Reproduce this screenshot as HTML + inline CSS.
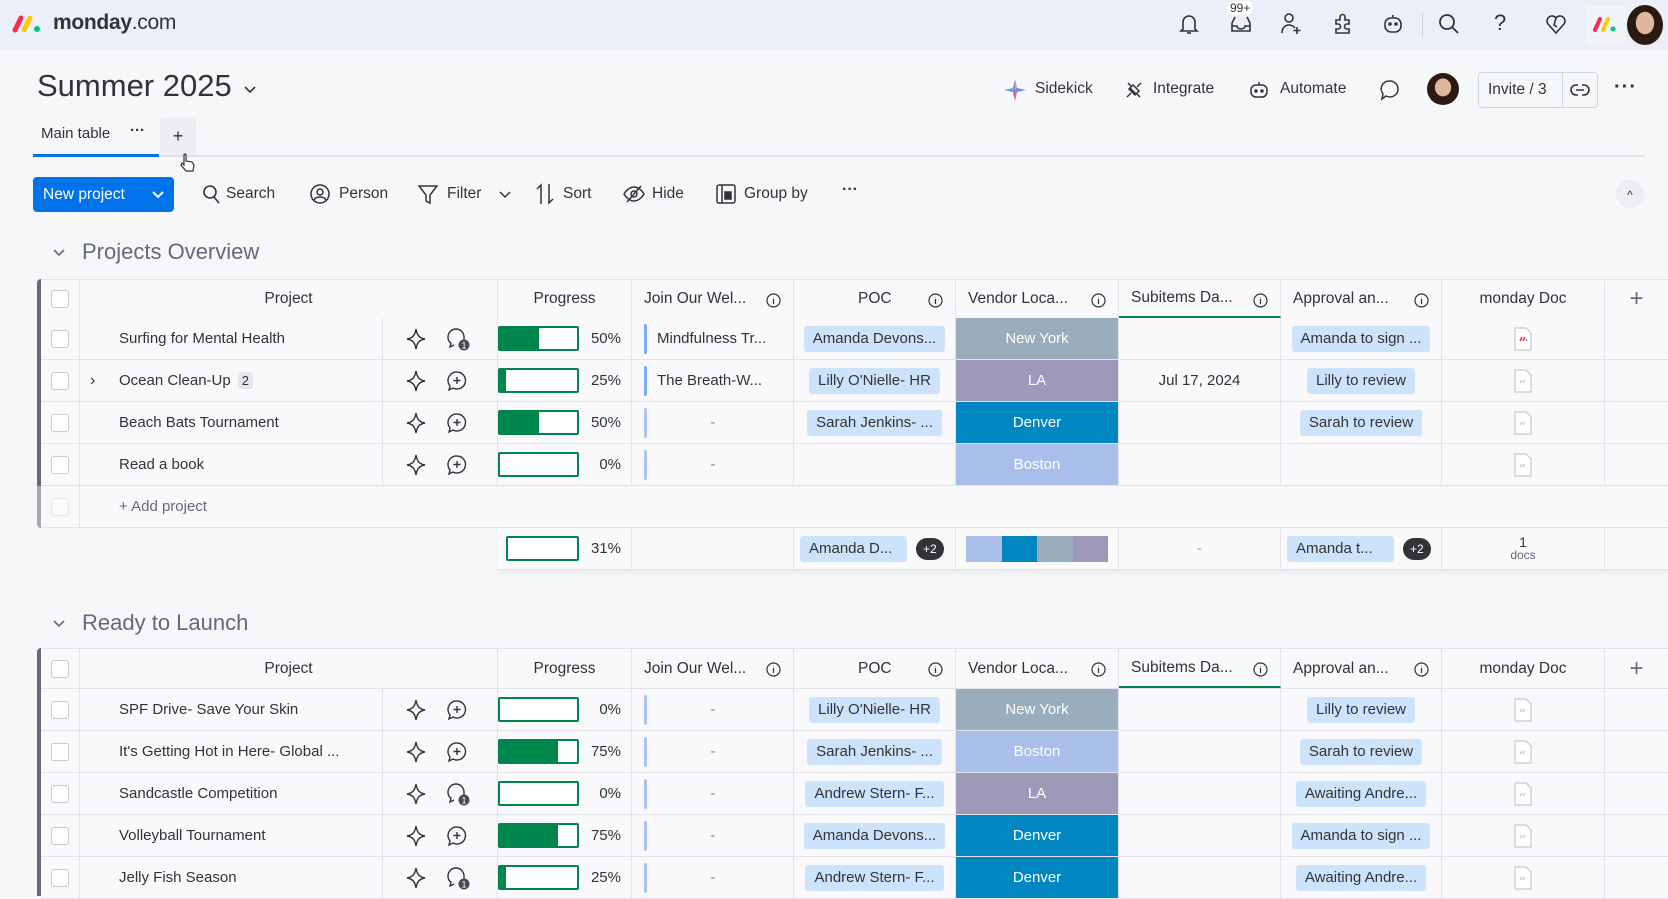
<!DOCTYPE html>
<html><head><meta charset="utf-8">
<style>
*{box-sizing:border-box;margin:0;padding:0}
body{width:1668px;height:896px;overflow:hidden;background:#f6f7f9;font-family:"Liberation Sans",sans-serif;color:#323338;position:relative}
.abs{position:absolute}
.top{position:absolute;left:0;top:0;width:1668px;height:50px;background:#eceff8}
svg{display:block}
.row{position:absolute;left:41px;height:42px;display:flex;border-bottom:1px solid #e3e4e9;background:#f9f9fb}
.c{height:100%;border-right:1px solid #e3e4e9;display:flex;align-items:center;font-size:15px;white-space:nowrap;overflow:hidden;position:relative}
.cb{width:39px;justify-content:center}
.chk{width:18px;height:18px;border:1px solid #c9cad0;border-radius:3px;background:#fff}
.pj{width:303px;padding-left:39px}
.ic{width:115px;gap:18px;padding-left:22px}
.pg{width:134px}
.jn{width:162px}
.poc{width:162px;justify-content:center}
.vd{width:163px;justify-content:center;color:#fff}
.sb{width:162px;justify-content:center}
.ap{width:161px;justify-content:center}
.dc{width:163px;justify-content:center}
.pl{width:63px;border-right:none}
.hdr .c{justify-content:center;font-size:15.5px;color:#323338}
.hdr .inf{position:absolute;right:12px;top:13px}
.bar{position:absolute;left:0;top:8px;width:81px;height:25px;border:2px solid #00854d;border-radius:2px;background:#fff}
.bar b{display:block;height:100%;background:#00854d}
.pct{position:absolute;right:10px;font-size:15px}
.jn i{position:absolute;left:12px;top:6px;width:3px;height:30px;border-radius:2px;background:#a9c5ef}
.jn i.d{background:#579bfc;opacity:.8}
.jn span{position:absolute;left:25px}
.jn span.dash{left:0;width:162px;text-align:center;color:#888}
.chip{background:#cce3fb;border-radius:3px;height:26px;line-height:26px;padding:0 9px;font-size:15px;color:#323338}
.ny{background:#9aadbd}.la{background:#9d99b9}.dn{background:#0086c0}.bs{background:#a9bee8}
.tb{font-size:15.5px;color:#323338}
.gt{font-size:22px;color:#676879}
</style></head><body>

<div class="top">
  <svg class="abs" style="left:12px;top:13px" width="30" height="20" viewBox="0 0 30 20"><path d="M3 17 L9 5" stroke="#f62b54" stroke-width="5" stroke-linecap="round"/><path d="M12 17 L18 5" stroke="#ffcc00" stroke-width="5" stroke-linecap="round"/><circle cx="25" cy="16" r="3" fill="#00ca72"/></svg>
  <div class="abs" style="left:53px;top:11px;font-size:21px;color:#323338;letter-spacing:-.3px"><b>monday</b>.com</div>
  <svg class="abs" style="left:1179px;top:13px" width="20" height="22" viewBox="0 0 20 22" fill="none" stroke="#323338" stroke-width="1.6"><path d="M4 16V9a6 6 0 0 1 12 0v7l2 2H2z"/><path d="M8 20h4"/></svg>
  <div class="abs" style="left:1227px;top:1px;font-size:12px;background:#fff;border-radius:8px;padding:0 3px">99+</div>
  <svg class="abs" style="left:1230px;top:14px" width="22" height="20" viewBox="0 0 22 20" fill="none" stroke="#323338" stroke-width="1.6"><path d="M2 9v8h18V9M2 9l3-6M20 9l-3-6M2 12h5a4 3 0 0 0 8 0h5"/></svg>
  <svg class="abs" style="left:1280px;top:12px" width="22" height="24" viewBox="0 0 22 24" fill="none" stroke="#323338" stroke-width="1.6"><circle cx="9" cy="6" r="4"/><path d="M2 21c0-5 3-8 7-8s5 2 6 3M17 15v7M13.5 18.5h7"/></svg>
  <svg class="abs" style="left:1331px;top:12px" width="22" height="24" viewBox="0 0 22 24" fill="none" stroke="#323338" stroke-width="1.6"><path d="M5 8h4V5a2.5 2.5 0 0 1 5 0v3h4v4h-2a2.5 2.5 0 0 0 0 5h2v4H5v-4h2a2.5 2.5 0 0 0 0-5H5z"/></svg>
  <svg class="abs" style="left:1382px;top:13px" width="22" height="22" viewBox="0 0 22 22" fill="none" stroke="#323338" stroke-width="1.6"><rect x="3" y="5" width="16" height="14" rx="6"/><path d="M11 2v3"/><circle cx="8" cy="11" r="1" fill="#323338"/><circle cx="14" cy="11" r="1" fill="#323338"/></svg>
  <div class="abs" style="left:1422px;top:12px;width:1px;height:26px;background:#d0d4e4"></div>
  <svg class="abs" style="left:1438px;top:13px" width="22" height="22" viewBox="0 0 22 22" fill="none" stroke="#323338" stroke-width="1.8"><circle cx="9" cy="9" r="7"/><path d="M14 14l6 6"/></svg>
  <div class="abs" style="left:1494px;top:10px;font-size:22px;color:#323338">?</div>
  <svg class="abs" style="left:1545px;top:13px" width="22" height="22" viewBox="0 0 22 22" fill="none" stroke="#323338" stroke-width="1.6"><path d="M11 20L3 11a5 5 0 0 1 8-6 5 5 0 0 1 8 6z"/><path d="M11 5l-2 7 3 2"/></svg>
  <div class="abs" style="left:1586px;top:6px;width:40px;height:38px;background:#f3f4f8;border-radius:4px"></div>
  <svg class="abs" style="left:1592px;top:15px" width="26" height="18" viewBox="0 0 26 18"><path d="M3 15 L8 4" stroke="#f62b54" stroke-width="4" stroke-linecap="round"/><path d="M11 15 L16 4" stroke="#ffcc00" stroke-width="4" stroke-linecap="round"/><circle cx="21" cy="14" r="2.5" fill="#00ca72"/></svg>
  <div class="abs" style="left:1627px;top:5px;width:36px;height:40px;border-radius:50%;background:radial-gradient(ellipse at 50% 45%,#e0b8a0 0 35%,#2a1a12 37%)"></div>
</div>

<div class="abs" style="left:37px;top:68px;font-size:31px;color:#323338">Summer 2025</div>
<svg class="abs" style="left:243px;top:85px" width="14" height="9" viewBox="0 0 14 9" fill="none" stroke="#323338" stroke-width="1.6"><path d="M2 2l5 5 5-5"/></svg>

<svg class="abs" style="left:1004px;top:79px" width="22" height="22" viewBox="0 0 22 22"><path d="M11 0 L13 9 L22 11 L13 13 L11 22 L9 13 L0 11 L9 9Z" fill="#6c8cf5"/><path d="M11 0 L13 9 L11 11Z" fill="#f5a623"/><path d="M0 11 L9 9 L11 11Z" fill="#4fc3c8"/><path d="M11 22 L9 13 L11 11Z" fill="#f05a8c"/></svg>
<div class="abs tb" style="left:1035px;top:80px">Sidekick</div>
<svg class="abs" style="left:1124px;top:80px" width="20" height="20" viewBox="0 0 20 20" fill="none" stroke="#323338" stroke-width="1.5"><path d="M4 3l3 3M16 17l-3-3M6 8l6 6M5 9l4-4 6 6-4 4zM3 17l4-4M17 3l-4 4"/></svg>
<div class="abs tb" style="left:1153px;top:80px">Integrate</div>
<svg class="abs" style="left:1249px;top:80px" width="20" height="20" viewBox="0 0 20 20" fill="none" stroke="#323338" stroke-width="1.5"><rect x="2" y="5" width="16" height="12" rx="5"/><path d="M10 2v3"/><circle cx="7" cy="11" r="1" fill="#323338"/><circle cx="13" cy="11" r="1" fill="#323338"/></svg>
<div class="abs tb" style="left:1280px;top:80px">Automate</div>
<svg class="abs" style="left:1379px;top:79px" width="22" height="22" viewBox="0 0 22 22" fill="none" stroke="#323338" stroke-width="1.5"><path d="M11 2a8 8 0 0 1 0 16c-2 0-3-.5-4-1l-4 3 1-5a8 8 0 0 1 7-13z"/></svg>
<div class="abs" style="left:1427px;top:73px;width:32px;height:32px;border-radius:50%;background:radial-gradient(ellipse at 50% 45%,#e0b8a0 0 35%,#2a1a12 37%)"></div>
<div class="abs" style="left:1478px;top:72px;width:120px;height:36px;border:1px solid #d0d4e4;border-radius:4px"></div>
<div class="abs" style="left:1562px;top:72px;width:1px;height:36px;background:#d0d4e4"></div>
<div class="abs tb" style="left:1488px;top:81px">Invite / 3</div>
<svg class="abs" style="left:1570px;top:81px" width="20" height="18" viewBox="0 0 20 18" fill="none" stroke="#323338" stroke-width="1.6"><path d="M8 4H6a5 5 0 0 0 0 10h2M12 4h2a5 5 0 0 1 0 10h-2M6 9h8"/></svg>
<div class="abs" style="left:1614px;top:76px;font-size:20px;letter-spacing:1px;font-weight:bold">···</div>

<div class="abs" style="left:41px;top:125px;font-size:15px">Main table</div>
<div class="abs" style="left:130px;top:122px;font-size:15px;font-weight:bold">···</div>
<div class="abs" style="left:160px;top:118px;width:36px;height:38px;background:#eceef2;border-radius:4px;font-size:18px;text-align:center;line-height:36px">+</div>
<div class="abs" style="left:33px;top:155px;width:1612px;height:2px;background:#e1e2e8"></div>
<div class="abs" style="left:33px;top:154px;width:126px;height:3px;background:#0073ea"></div>
<svg class="abs" style="left:180px;top:153px" width="16" height="20" viewBox="0 0 16 20" fill="#fff" stroke="#323338" stroke-width="1.2"><path d="M4 2v10l-2-2-1 2 5 6h7l1-6-2-3-6-1V2a1 1 0 0 0-2 0z"/></svg>

<div class="abs" style="left:33px;top:177px;width:141px;height:35px;background:#0073ea;border-radius:4px;color:#fff;font-size:15.5px;line-height:35px;padding-left:10px">New project</div>
<svg class="abs" style="left:152px;top:191px" width="12" height="8" viewBox="0 0 12 8" fill="none" stroke="#fff" stroke-width="2"><path d="M1 1l5 5 5-5"/></svg>
<svg class="abs" style="left:202px;top:184px" width="18" height="20" viewBox="0 0 18 20" fill="none" stroke="#323338" stroke-width="1.6"><circle cx="8" cy="8" r="6"/><path d="M12 13l5 6"/></svg>
<div class="abs tb" style="left:226px;top:185px">Search</div>
<svg class="abs" style="left:310px;top:184px" width="20" height="20" viewBox="0 0 20 20" fill="none" stroke="#323338" stroke-width="1.5"><circle cx="10" cy="10" r="9"/><circle cx="10" cy="8" r="3"/><path d="M4 16c2-4 10-4 12 0"/></svg>
<div class="abs tb" style="left:339px;top:185px">Person</div>
<svg class="abs" style="left:418px;top:184px" width="20" height="21" viewBox="0 0 20 21" fill="none" stroke="#323338" stroke-width="1.5"><path d="M1 2h18l-7 9v8l-4-2v-6z"/></svg>
<div class="abs tb" style="left:447px;top:185px">Filter</div>
<svg class="abs" style="left:499px;top:191px" width="12" height="8" viewBox="0 0 12 8" fill="none" stroke="#323338" stroke-width="1.5"><path d="M1 1l5 5 5-5"/></svg>
<svg class="abs" style="left:536px;top:183px" width="18" height="22" viewBox="0 0 18 22" fill="none" stroke="#323338" stroke-width="1.5"><path d="M5 21V2L1 6M13 1v19l4-4"/></svg>
<div class="abs tb" style="left:563px;top:185px">Sort</div>
<svg class="abs" style="left:623px;top:185px" width="22" height="18" viewBox="0 0 22 18" fill="none" stroke="#323338" stroke-width="1.5"><path d="M1 9c3-5 7-7 10-7s7 2 10 7c-3 5-7 7-10 7S4 14 1 9z"/><circle cx="11" cy="9" r="3"/><path d="M4 17L18 1"/></svg>
<div class="abs tb" style="left:652px;top:185px">Hide</div>
<svg class="abs" style="left:716px;top:184px" width="20" height="20" viewBox="0 0 20 20" fill="none" stroke="#323338" stroke-width="1.5"><rect x="1" y="1" width="18" height="18" rx="2"/><path d="M6 1v18"/><rect x="9" y="8" width="6" height="7" fill="#323338"/></svg>
<div class="abs tb" style="left:744px;top:185px">Group by</div>
<div class="abs" style="left:842px;top:181px;font-size:16px;font-weight:bold">···</div>
<div class="abs" style="left:1616px;top:180px;width:28px;height:28px;border-radius:50%;background:#eceef2;text-align:center;font-size:12px;line-height:30px">^</div>

<svg class="abs" style="left:52px;top:248px" width="14" height="9" viewBox="0 0 14 9" fill="none" stroke="#676879" stroke-width="1.6"><path d="M2 2l5 5 5-5"/></svg>
<div class="abs gt" style="left:82px;top:239px">Projects Overview</div>
<div class="abs" style="left:37px;top:279px;width:5px;height:207px;background:#676879;border-radius:4px 0 0 0"></div>
<div class="abs" style="left:37px;top:486px;width:5px;height:42px;background:#a8a9b0;border-radius:0 0 0 4px"></div>

<div class="row hdr" style="top:279px;height:40px;border-top:1px solid #e3e4e9">
<div class="c cb"><i class="chk"></i></div>
<div class="c" style="width:418px;padding-left:0">Project</div>
<div class="c pg" style="justify-content:center">Progress</div>
<div class="c jn" style="justify-content:flex-start;padding-left:12px">Join Our Wel...<svg class="inf" width="15" height="15" viewBox="0 0 15 15" fill="none" stroke="#323338" stroke-width="1.2"><circle cx="7.5" cy="7.5" r="6.5"/><path d="M7.5 6v5M7.5 4v.5"/></svg></div>
<div class="c poc" style="justify-content:flex-start;padding-left:64px">POC<svg class="inf" width="15" height="15" viewBox="0 0 15 15" fill="none" stroke="#323338" stroke-width="1.2"><circle cx="7.5" cy="7.5" r="6.5"/><path d="M7.5 6v5M7.5 4v.5"/></svg></div>
<div class="c vd" style="color:#323338;justify-content:flex-start;padding-left:12px">Vendor Loca...<svg class="inf" width="15" height="15" viewBox="0 0 15 15" fill="none" stroke="#323338" stroke-width="1.2"><circle cx="7.5" cy="7.5" r="6.5"/><path d="M7.5 6v5M7.5 4v.5"/></svg></div>
<div class="c sb" style="justify-content:flex-start;padding-left:12px;border-bottom:2px solid #00854d">Subitems Da...<svg class="inf" width="15" height="15" viewBox="0 0 15 15" fill="none" stroke="#323338" stroke-width="1.2"><circle cx="7.5" cy="7.5" r="6.5"/><path d="M7.5 6v5M7.5 4v.5"/></svg></div>
<div class="c ap" style="justify-content:flex-start;padding-left:12px">Approval an...<svg class="inf" width="15" height="15" viewBox="0 0 15 15" fill="none" stroke="#323338" stroke-width="1.2"><circle cx="7.5" cy="7.5" r="6.5"/><path d="M7.5 6v5M7.5 4v.5"/></svg></div>
<div class="c dc">monday Doc</div>
<div class="c pl" style="font-size:24px;font-weight:300;color:#676879">+</div>
</div>

<div class="row" style="top:318px">
<div class="c cb"><i class="chk"></i></div><div class="c pj">Surfing for Mental Health</div>
<div class="c ic"><svg width="22" height="24" viewBox="0 0 22 24" fill="none" stroke="#323338" stroke-width="1.4"><path d="M11 2C12 8 14 11 20 12 14 13 12 16 11 22 10 16 8 13 2 12 8 11 10 8 11 2Z"/></svg><svg width="26" height="26" viewBox="0 0 26 26" fill="none" stroke="#323338" stroke-width="1.4"><path d="M11 3a8 8 0 0 1 8 8v3M11 3a8 8 0 0 0-8 8c0 3 1 5 3 6l-1 4 4-2"/><circle cx="19" cy="19" r="5.5" fill="#4a4b52" stroke="none"/><text x="19" y="22.5" font-size="9" fill="#fff" stroke="none" text-anchor="middle" font-family="Liberation Sans">1</text></svg></div>
<div class="c pg"><div class="bar"><b style="width:50%"></b></div><span class="pct">50%</span></div>
<div class="c jn"><i class="d"></i><span>Mindfulness Tr...</span></div>
<div class="c poc"><span class="chip">Amanda Devons...</span></div>
<div class="c vd ny">New York</div><div class="c sb"></div>
<div class="c ap"><span class="chip">Amanda to sign ...</span></div>
<div class="c dc"><svg width="18" height="26" viewBox="0 0 18 26" fill="#fff" stroke="#c5c7d0" stroke-width="1.2"><path d="M1 2h11l5 5v17H1z"/><path d="M6 15l2-4M9 15l2-4" stroke="#f62b54" stroke-width="1.6"/><circle cx="12.5" cy="14" r="1" fill="#00ca72" stroke="none"/></svg></div><div class="c pl"></div>
</div>

<div class="row" style="top:360px">
<div class="c cb"><i class="chk"></i></div><div class="c pj"><span style="position:absolute;left:10px;font-size:16px">›</span>Ocean Clean-Up <span style="background:#e6e7ec;border-radius:3px;padding:1px 4px;font-size:13px;margin-left:7px">2</span></div>
<div class="c ic"><svg width="22" height="24" viewBox="0 0 22 24" fill="none" stroke="#323338" stroke-width="1.4"><path d="M11 2C12 8 14 11 20 12 14 13 12 16 11 22 10 16 8 13 2 12 8 11 10 8 11 2Z"/></svg><svg width="24" height="24" viewBox="0 0 24 24" fill="none" stroke="#323338" stroke-width="1.4"><path d="M12 3a8.5 8.5 0 1 1-4 16l-4 2 1-4a8.5 8.5 0 0 1 7-14z"/><path d="M12 8v7M8.5 11.5h7"/></svg></div>
<div class="c pg"><div class="bar"><b style="width:8%"></b></div><span class="pct">25%</span></div>
<div class="c jn"><i class="d"></i><span>The Breath-W...</span></div>
<div class="c poc"><span class="chip">Lilly O'Nielle- HR</span></div>
<div class="c vd la">LA</div><div class="c sb">Jul 17, 2024</div>
<div class="c ap"><span class="chip">Lilly to review</span></div>
<div class="c dc"><svg width="18" height="26" viewBox="0 0 18 26" fill="#fff" stroke="#c5c7d0" stroke-width="1.2"><path d="M1 2h11l5 5v17H1z"/><path d="M6 15l2-3M9 15l2-3"/></svg></div><div class="c pl"></div>
</div>

<div class="row" style="top:402px">
<div class="c cb"><i class="chk"></i></div><div class="c pj">Beach Bats Tournament</div>
<div class="c ic"><svg width="22" height="24" viewBox="0 0 22 24" fill="none" stroke="#323338" stroke-width="1.4"><path d="M11 2C12 8 14 11 20 12 14 13 12 16 11 22 10 16 8 13 2 12 8 11 10 8 11 2Z"/></svg><svg width="24" height="24" viewBox="0 0 24 24" fill="none" stroke="#323338" stroke-width="1.4"><path d="M12 3a8.5 8.5 0 1 1-4 16l-4 2 1-4a8.5 8.5 0 0 1 7-14z"/><path d="M12 8v7M8.5 11.5h7"/></svg></div>
<div class="c pg"><div class="bar"><b style="width:50%"></b></div><span class="pct">50%</span></div>
<div class="c jn"><i></i><span class="dash">-</span></div>
<div class="c poc"><span class="chip">Sarah Jenkins- ...</span></div>
<div class="c vd dn">Denver</div><div class="c sb"></div>
<div class="c ap"><span class="chip">Sarah to review</span></div>
<div class="c dc"><svg width="18" height="26" viewBox="0 0 18 26" fill="#fff" stroke="#c5c7d0" stroke-width="1.2"><path d="M1 2h11l5 5v17H1z"/><path d="M6 15l2-3M9 15l2-3"/></svg></div><div class="c pl"></div>
</div>

<div class="row" style="top:444px">
<div class="c cb"><i class="chk"></i></div><div class="c pj">Read a book</div>
<div class="c ic"><svg width="22" height="24" viewBox="0 0 22 24" fill="none" stroke="#323338" stroke-width="1.4"><path d="M11 2C12 8 14 11 20 12 14 13 12 16 11 22 10 16 8 13 2 12 8 11 10 8 11 2Z"/></svg><svg width="24" height="24" viewBox="0 0 24 24" fill="none" stroke="#323338" stroke-width="1.4"><path d="M12 3a8.5 8.5 0 1 1-4 16l-4 2 1-4a8.5 8.5 0 0 1 7-14z"/><path d="M12 8v7M8.5 11.5h7"/></svg></div>
<div class="c pg"><div class="bar"><b style="width:0%"></b></div><span class="pct">0%</span></div>
<div class="c jn"><i></i><span class="dash">-</span></div>
<div class="c poc"></div>
<div class="c vd bs">Boston</div><div class="c sb"></div>
<div class="c ap"></div>
<div class="c dc"><svg width="18" height="26" viewBox="0 0 18 26" fill="#fff" stroke="#c5c7d0" stroke-width="1.2"><path d="M1 2h11l5 5v17H1z"/><path d="M6 15l2-3M9 15l2-3"/></svg></div><div class="c pl"></div>
</div>

<div class="row" style="top:486px;width:1627px">
<div class="c cb"><i class="chk" style="opacity:.4"></i></div><div class="c" style="width:1588px;padding-left:39px;border-right:none;color:#676879">+ Add project</div>
</div>

<div class="row" style="top:528px;left:498px;width:1170px;background:#fafafb;box-shadow:0 3px 5px rgba(0,0,0,.06)">
<div class="c pg"><div class="bar" style="left:8px;width:73px;top:8px"></div><span class="pct">31%</span></div>
<div class="c jn"></div>
<div class="c poc" style="justify-content:flex-start;padding-left:6px;gap:9px"><span class="chip" style="width:107px">Amanda D...</span><span style="background:#323338;color:#fff;border-radius:12px;font-size:12px;padding:4px 7px">+2</span></div>
<div class="c vd" style="padding:0 10px"><div style="display:flex;width:143px;height:26px"><i style="flex:1;background:#a9bee8"></i><i style="flex:1;background:#0086c0"></i><i style="flex:1;background:#9aadbd"></i><i style="flex:1;background:#9d99b9"></i></div></div>
<div class="c sb" style="color:#aaa">-</div>
<div class="c ap" style="justify-content:flex-start;padding-left:6px;gap:9px"><span class="chip" style="width:107px">Amanda t...</span><span style="background:#323338;color:#fff;border-radius:12px;font-size:12px;padding:4px 7px">+2</span></div>
<div class="c dc" style="flex-direction:column;justify-content:center;line-height:13px;font-size:14px">1<span style="font-size:12px;color:#676879">docs</span></div>
<div class="c pl"></div>
</div>

<svg class="abs" style="left:52px;top:619px" width="14" height="9" viewBox="0 0 14 9" fill="none" stroke="#676879" stroke-width="1.6"><path d="M2 2l5 5 5-5"/></svg>
<div class="abs gt" style="left:82px;top:610px">Ready to Launch</div>
<div class="abs" style="left:37px;top:648px;width:5px;height:248px;background:#676879;border-radius:4px 0 0 0"></div>

<div class="row hdr" style="top:648px;height:41px;border-top:1px solid #e3e4e9">
<div class="c cb"><i class="chk"></i></div>
<div class="c" style="width:418px">Project</div>
<div class="c pg" style="justify-content:center">Progress</div>
<div class="c jn" style="justify-content:flex-start;padding-left:12px">Join Our Wel...<svg class="inf" width="15" height="15" viewBox="0 0 15 15" fill="none" stroke="#323338" stroke-width="1.2"><circle cx="7.5" cy="7.5" r="6.5"/><path d="M7.5 6v5M7.5 4v.5"/></svg></div>
<div class="c poc" style="justify-content:flex-start;padding-left:64px">POC<svg class="inf" width="15" height="15" viewBox="0 0 15 15" fill="none" stroke="#323338" stroke-width="1.2"><circle cx="7.5" cy="7.5" r="6.5"/><path d="M7.5 6v5M7.5 4v.5"/></svg></div>
<div class="c vd" style="color:#323338;justify-content:flex-start;padding-left:12px">Vendor Loca...<svg class="inf" width="15" height="15" viewBox="0 0 15 15" fill="none" stroke="#323338" stroke-width="1.2"><circle cx="7.5" cy="7.5" r="6.5"/><path d="M7.5 6v5M7.5 4v.5"/></svg></div>
<div class="c sb" style="justify-content:flex-start;padding-left:12px;border-bottom:2px solid #00854d">Subitems Da...<svg class="inf" width="15" height="15" viewBox="0 0 15 15" fill="none" stroke="#323338" stroke-width="1.2"><circle cx="7.5" cy="7.5" r="6.5"/><path d="M7.5 6v5M7.5 4v.5"/></svg></div>
<div class="c ap" style="justify-content:flex-start;padding-left:12px">Approval an...<svg class="inf" width="15" height="15" viewBox="0 0 15 15" fill="none" stroke="#323338" stroke-width="1.2"><circle cx="7.5" cy="7.5" r="6.5"/><path d="M7.5 6v5M7.5 4v.5"/></svg></div>
<div class="c dc">monday Doc</div>
<div class="c pl" style="font-size:24px;font-weight:300;color:#676879">+</div>
</div>

<div class="row" style="top:689px">
<div class="c cb"><i class="chk"></i></div><div class="c pj">SPF Drive- Save Your Skin</div>
<div class="c ic"><svg width="22" height="24" viewBox="0 0 22 24" fill="none" stroke="#323338" stroke-width="1.4"><path d="M11 2C12 8 14 11 20 12 14 13 12 16 11 22 10 16 8 13 2 12 8 11 10 8 11 2Z"/></svg><svg width="24" height="24" viewBox="0 0 24 24" fill="none" stroke="#323338" stroke-width="1.4"><path d="M12 3a8.5 8.5 0 1 1-4 16l-4 2 1-4a8.5 8.5 0 0 1 7-14z"/><path d="M12 8v7M8.5 11.5h7"/></svg></div>
<div class="c pg"><div class="bar"><b style="width:0%"></b></div><span class="pct">0%</span></div>
<div class="c jn"><i></i><span class="dash">-</span></div>
<div class="c poc"><span class="chip">Lilly O'Nielle- HR</span></div>
<div class="c vd ny">New York</div><div class="c sb"></div>
<div class="c ap"><span class="chip">Lilly to review</span></div>
<div class="c dc"><svg width="18" height="26" viewBox="0 0 18 26" fill="#fff" stroke="#c5c7d0" stroke-width="1.2"><path d="M1 2h11l5 5v17H1z"/><path d="M6 15l2-3M9 15l2-3"/></svg></div><div class="c pl"></div>
</div>

<div class="row" style="top:731px">
<div class="c cb"><i class="chk"></i></div><div class="c pj">It's Getting Hot in Here- Global ...</div>
<div class="c ic"><svg width="22" height="24" viewBox="0 0 22 24" fill="none" stroke="#323338" stroke-width="1.4"><path d="M11 2C12 8 14 11 20 12 14 13 12 16 11 22 10 16 8 13 2 12 8 11 10 8 11 2Z"/></svg><svg width="24" height="24" viewBox="0 0 24 24" fill="none" stroke="#323338" stroke-width="1.4"><path d="M12 3a8.5 8.5 0 1 1-4 16l-4 2 1-4a8.5 8.5 0 0 1 7-14z"/><path d="M12 8v7M8.5 11.5h7"/></svg></div>
<div class="c pg"><div class="bar"><b style="width:75%"></b></div><span class="pct">75%</span></div>
<div class="c jn"><i></i><span class="dash">-</span></div>
<div class="c poc"><span class="chip">Sarah Jenkins- ...</span></div>
<div class="c vd bs">Boston</div><div class="c sb"></div>
<div class="c ap"><span class="chip">Sarah to review</span></div>
<div class="c dc"><svg width="18" height="26" viewBox="0 0 18 26" fill="#fff" stroke="#c5c7d0" stroke-width="1.2"><path d="M1 2h11l5 5v17H1z"/><path d="M6 15l2-3M9 15l2-3"/></svg></div><div class="c pl"></div>
</div>

<div class="row" style="top:773px">
<div class="c cb"><i class="chk"></i></div><div class="c pj">Sandcastle Competition</div>
<div class="c ic"><svg width="22" height="24" viewBox="0 0 22 24" fill="none" stroke="#323338" stroke-width="1.4"><path d="M11 2C12 8 14 11 20 12 14 13 12 16 11 22 10 16 8 13 2 12 8 11 10 8 11 2Z"/></svg><svg width="26" height="26" viewBox="0 0 26 26" fill="none" stroke="#323338" stroke-width="1.4"><path d="M11 3a8 8 0 0 1 8 8v3M11 3a8 8 0 0 0-8 8c0 3 1 5 3 6l-1 4 4-2"/><circle cx="19" cy="19" r="5.5" fill="#4a4b52" stroke="none"/><text x="19" y="22.5" font-size="9" fill="#fff" stroke="none" text-anchor="middle" font-family="Liberation Sans">1</text></svg></div>
<div class="c pg"><div class="bar"><b style="width:0%"></b></div><span class="pct">0%</span></div>
<div class="c jn"><i></i><span class="dash">-</span></div>
<div class="c poc"><span class="chip">Andrew Stern- F...</span></div>
<div class="c vd la">LA</div><div class="c sb"></div>
<div class="c ap"><span class="chip">Awaiting Andre...</span></div>
<div class="c dc"><svg width="18" height="26" viewBox="0 0 18 26" fill="#fff" stroke="#c5c7d0" stroke-width="1.2"><path d="M1 2h11l5 5v17H1z"/><path d="M6 15l2-3M9 15l2-3"/></svg></div><div class="c pl"></div>
</div>

<div class="row" style="top:815px">
<div class="c cb"><i class="chk"></i></div><div class="c pj">Volleyball Tournament</div>
<div class="c ic"><svg width="22" height="24" viewBox="0 0 22 24" fill="none" stroke="#323338" stroke-width="1.4"><path d="M11 2C12 8 14 11 20 12 14 13 12 16 11 22 10 16 8 13 2 12 8 11 10 8 11 2Z"/></svg><svg width="24" height="24" viewBox="0 0 24 24" fill="none" stroke="#323338" stroke-width="1.4"><path d="M12 3a8.5 8.5 0 1 1-4 16l-4 2 1-4a8.5 8.5 0 0 1 7-14z"/><path d="M12 8v7M8.5 11.5h7"/></svg></div>
<div class="c pg"><div class="bar"><b style="width:75%"></b></div><span class="pct">75%</span></div>
<div class="c jn"><i></i><span class="dash">-</span></div>
<div class="c poc"><span class="chip">Amanda Devons...</span></div>
<div class="c vd dn">Denver</div><div class="c sb"></div>
<div class="c ap"><span class="chip">Amanda to sign ...</span></div>
<div class="c dc"><svg width="18" height="26" viewBox="0 0 18 26" fill="#fff" stroke="#c5c7d0" stroke-width="1.2"><path d="M1 2h11l5 5v17H1z"/><path d="M6 15l2-3M9 15l2-3"/></svg></div><div class="c pl"></div>
</div>

<div class="row" style="top:857px">
<div class="c cb"><i class="chk"></i></div><div class="c pj">Jelly Fish Season</div>
<div class="c ic"><svg width="22" height="24" viewBox="0 0 22 24" fill="none" stroke="#323338" stroke-width="1.4"><path d="M11 2C12 8 14 11 20 12 14 13 12 16 11 22 10 16 8 13 2 12 8 11 10 8 11 2Z"/></svg><svg width="26" height="26" viewBox="0 0 26 26" fill="none" stroke="#323338" stroke-width="1.4"><path d="M11 3a8 8 0 0 1 8 8v3M11 3a8 8 0 0 0-8 8c0 3 1 5 3 6l-1 4 4-2"/><circle cx="19" cy="19" r="5.5" fill="#4a4b52" stroke="none"/><text x="19" y="22.5" font-size="9" fill="#fff" stroke="none" text-anchor="middle" font-family="Liberation Sans">1</text></svg></div>
<div class="c pg"><div class="bar"><b style="width:8%"></b></div><span class="pct">25%</span></div>
<div class="c jn"><i></i><span class="dash">-</span></div>
<div class="c poc"><span class="chip">Andrew Stern- F...</span></div>
<div class="c vd dn">Denver</div><div class="c sb"></div>
<div class="c ap"><span class="chip">Awaiting Andre...</span></div>
<div class="c dc"><svg width="18" height="26" viewBox="0 0 18 26" fill="#fff" stroke="#c5c7d0" stroke-width="1.2"><path d="M1 2h11l5 5v17H1z"/><path d="M6 15l2-3M9 15l2-3"/></svg></div><div class="c pl"></div>
</div>

</body></html>
